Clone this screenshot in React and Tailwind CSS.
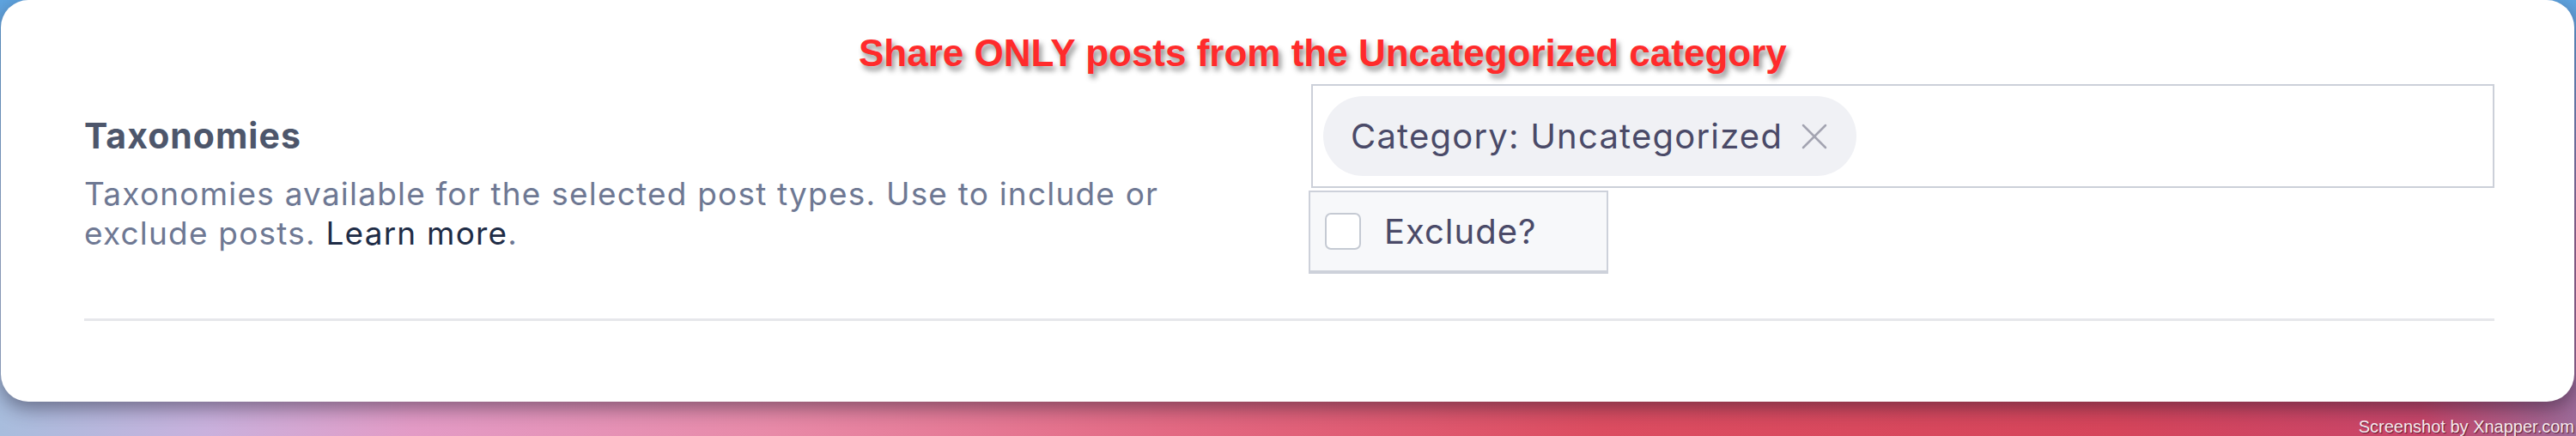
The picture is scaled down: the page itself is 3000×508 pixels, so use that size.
export default function App() {
  return (
    <div className="relative h-[508px] w-[3000px] overflow-hidden [background-image:linear-gradient(180deg,rgba(95,165,225,1)_0%,rgba(95,165,225,0)_55%),linear-gradient(90deg,#a8bddd_0%,#c9b1dd_8%,#e39bc6_16%,#e88aa8_30%,#e36a84_45%,#dc4d61_62%,#d6455b_82%,#c8466a_94%,#9d6b99_100%)]">
      <div className="ml-[1px] h-[468px] w-[2997px] rounded-[32px] bg-white pl-[97px] pr-[93px] pt-[98px] shadow-[0_8px_22px_rgba(20,20,40,0.45)] font-['Inter','Noto_Sans',sans-serif]">
        <div className="flex">
          <div className="w-[1429px] shrink-0 pt-[36px]">
            <h2 className="text-[41px] font-bold leading-[48px] tracking-[1px] text-[#4d566b]">Taxonomies</h2>
            <p className="mt-[21px] max-w-[1320px] text-[37px] leading-[46px] tracking-[1.2px] text-[#6e7893]">
              Taxonomies available for the selected post types. Use to include or exclude posts.{" "}
              <a className="text-[#1e2c46]">Learn more</a>.
            </p>
          </div>
          <div className="flex-1">
            <div className="flex h-[121px] items-start border-2 border-[#ccd0d9] p-[12px]">
              <div className="flex h-[93px] items-center gap-[22px] rounded-full bg-[#f0f1f5] pl-[32px] pr-[34px]">
                <span className="text-[40px] leading-none tracking-[1.2px] text-[#4a4a68]">Category: Uncategorized</span>
                <svg width="30" height="30" viewBox="0 0 30 30" fill="none" stroke="#a3a4b1" strokeWidth="2.5" strokeLinecap="round">
                  <line x1="2" y1="2" x2="28" y2="28" />
                  <line x1="28" y1="2" x2="2" y2="28" />
                </svg>
              </div>
            </div>
            <div className="-ml-[3px] mt-[3px] flex h-[97px] w-[349px] items-center gap-[27px] border-2 border-b-[4px] border-[#cdd1da] bg-[#f7f8fa] pl-[17px]">
              <span className="h-[43px] w-[42px] rounded-[7px] border-2 border-[#c5cad3] bg-white" />
              <span className="text-[40px] leading-none tracking-[1px] text-[#4a4a68]">Exclude?</span>
            </div>
          </div>
        </div>
        <div className="mt-[52px] h-[3px] bg-[#e6e7eb]" />
      </div>
      <div className="absolute left-[1000px] top-[40px] whitespace-nowrap font-['Liberation_Sans',Arial,sans-serif] text-[44px] font-bold leading-[44px] text-[#ff2b2b] [-webkit-text-stroke:7px_white] [paint-order:stroke_fill] [text-shadow:3px_5px_6px_rgba(0,0,0,0.45)]">
        Share ONLY posts from the Uncategorized category
      </div>
      <div className="absolute bottom-[1px] right-[2px] whitespace-nowrap font-['Liberation_Sans',Arial,sans-serif] text-[20px] leading-[20px] text-[#f7eaee] [text-shadow:1px_1px_1px_rgba(70,20,40,0.85)]">
        Screenshot by Xnapper.com
      </div>
    </div>
  );
}
